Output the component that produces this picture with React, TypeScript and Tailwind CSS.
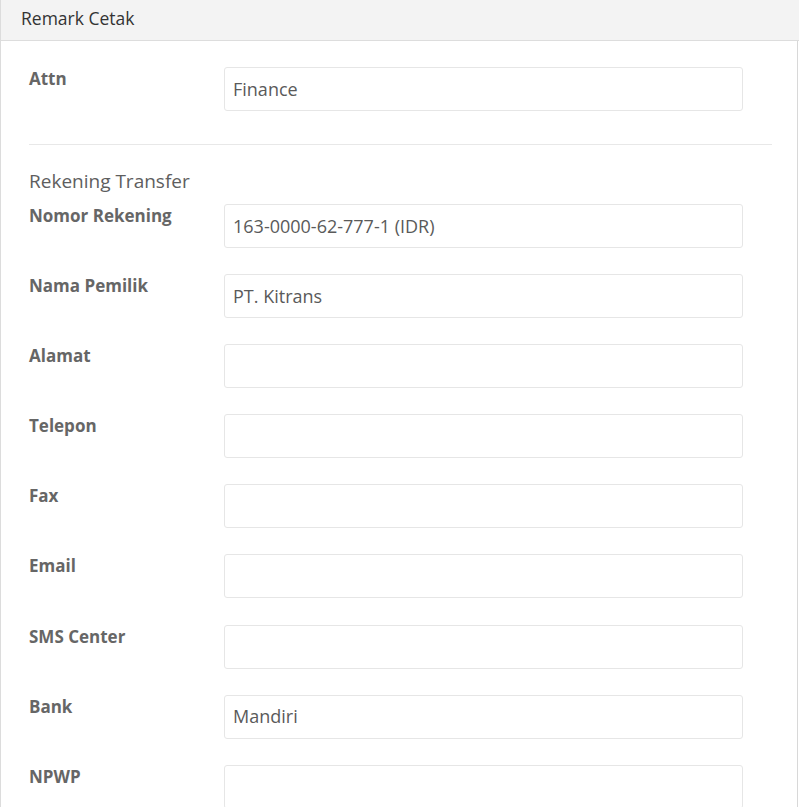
import React from "react";

const rows: { label: string; value: string }[] = [
  { label: "Nomor Rekening", value: "163-0000-62-777-1 (IDR)" },
  { label: "Nama Pemilik", value: "PT. Kitrans" },
  { label: "Alamat", value: "" },
  { label: "Telepon", value: "" },
  { label: "Fax", value: "" },
  { label: "Email", value: "" },
  { label: "SMS Center", value: "" },
  { label: "Bank", value: "Mandiri" },
  { label: "NPWP", value: "" },
];

function Field({ label, value }: { label: string; value: string }) {
  return (
    <div className="flex h-[44px]">
      <div className="w-[195px] shrink-0 pt-[0px] text-[17px] leading-[23px] font-bold text-[#666]">
        {label}
      </div>
      <div className="w-[519px] h-[44px] border border-[#e6e6e6] rounded-[3px] flex items-center px-[8px] text-[18px] text-[#5a5a5a]">
        {value}
      </div>
    </div>
  );
}

export default function App() {
  return (
    <div
      className="w-[803px] h-[807px] overflow-hidden bg-white"
      style={{ fontFamily: '"Open Sans", "Noto Sans", sans-serif' }}
    >
      <div className="w-[799px] border-l border-[#dcdcdc]">
        <div className="h-[41px] bg-[#f3f3f3] border-b border-[#dddddd] pl-[20px] flex items-center text-[17.5px] text-[#333] pb-[3px]">
          Remark Cetak
        </div>
        <div className="mr-[1px] border-r border-[#d8d8d8] pl-[28px] pr-[26px] pt-[26px] h-[780px]">
          <Field label="Attn" value="Finance" />
          <div className="mt-[33px] border-t border-[#e8e8e8] w-[743px]" />
          <div className="mt-[23px] text-[19px] leading-[26px] text-[#5e5e5e]">
            Rekening Transfer
          </div>
          <div className="mt-[10px] flex flex-col gap-[26.1px]">
            {rows.map((r) => (
              <Field key={r.label} label={r.label} value={r.value} />
            ))}
          </div>
        </div>
      </div>
    </div>
  );
}
